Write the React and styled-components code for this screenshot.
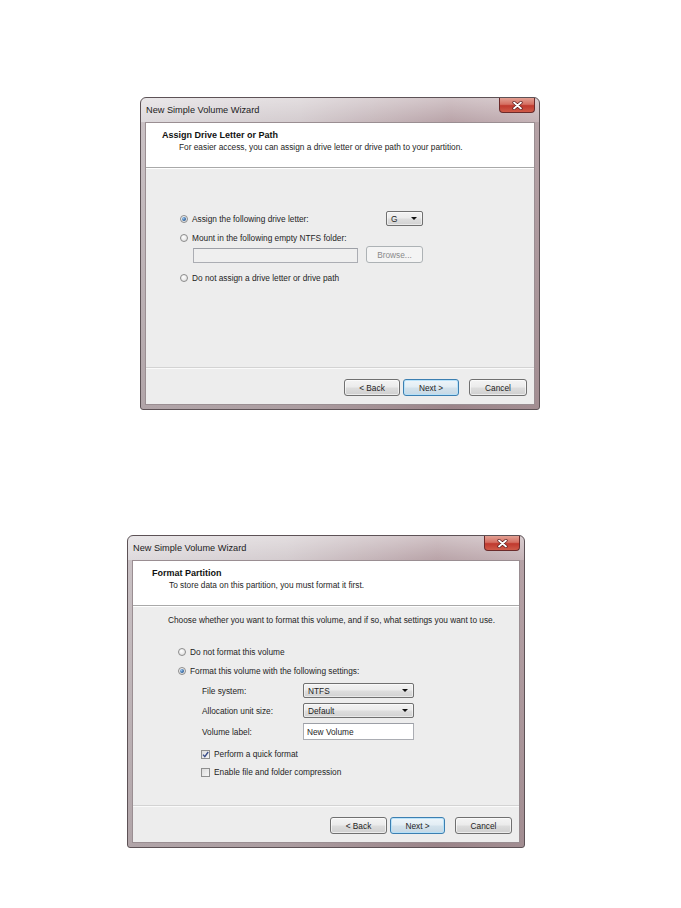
import React from 'react'
import styled, { createGlobalStyle, css } from 'styled-components'

const GlobalStyle = createGlobalStyle`
  html, body { margin: 0; padding: 0; background: #fff; }
  body { font-family: "Liberation Sans", Arial, sans-serif; color: #1e1e1e; }
`

const Page = styled.div`
  width: 681px;
  height: 908px;
  padding-top: 97px;
  box-sizing: border-box;
  background: #fff;
  overflow: hidden;
`

const Window = styled.div`
  position: relative;
  width: ${p => p.$width}px;
  height: 313px;
  margin-left: ${p => p.$left}px;
  margin-top: ${p => p.$top || 0}px;
  box-sizing: border-box;
  display: flex;
  flex-direction: column;
  border: 1px solid #5d5256;
  border-radius: 6px 6px 3px 3px;
  background:
    linear-gradient(180deg, rgba(255,255,255,0.35) 0, rgba(255,255,255,0) 24px, rgba(120,95,100,0.2) 24px, rgba(110,85,90,0.4) 100%),
    linear-gradient(90deg, #dedadd 0%, #d4cccf 40%, #b9a3a8 78%, #c5b3b7 100%);
`

const TitleBar = styled.div`
  height: 24px;
  flex: none;
  display: flex;
  align-items: center;
  padding-left: 5px;
  font-size: 9.2px;
  color: #1b1b1b;
`

const CloseButton = styled.div`
  position: absolute;
  top: 0;
  right: 4px;
  width: 36px;
  height: 15px;
  box-sizing: border-box;
  border: 1px solid #6b2a2a;
  border-top: none;
  border-radius: 0 0 4px 4px;
  background: linear-gradient(180deg, #e3a093 0%, #d56f62 45%, #c0392e 55%, #cf5a48 100%);
  display: flex;
  align-items: center;
  justify-content: center;
`

const Client = styled.div`
  flex: 1;
  margin: 0 4px 4px 4px;
  border: 1px solid #9a8e92;
  background: #ededed;
  display: flex;
  flex-direction: column;
  min-height: 0;
`

const Header = styled.div`
  height: 45px;
  flex: none;
  box-sizing: border-box;
  background: #fff;
  border-bottom: 1px solid #a9a9a9;
  padding: 7px 0 0 ${p => p.$indent}px;
`

const Heading = styled.div`
  font-size: 9px;
  font-weight: bold;
  line-height: 11px;
  color: #111;
`

const SubHeading = styled.div`
  font-size: 8.3px;
  line-height: 11px;
  margin: 1px 0 0 17px;
`

const Body = styled.div`
  flex: 1;
  display: flex;
  flex-direction: column;
  padding: ${p => p.$top}px 0 0 ${p => p.$left}px;
  font-size: 8.3px;
  box-shadow: inset 0 1px 0 #fff;
`

const Footer = styled.div`
  height: 37px;
  flex: none;
  box-sizing: border-box;
  border-top: 1px solid #d3d3d3;
  box-shadow: inset 0 1px 0 #fafafa;
  display: flex;
  justify-content: flex-end;
  align-items: flex-start;
  padding: 11px 7px 0 0;
`

const Button = styled.div`
  width: ${p => p.$w}px;
  height: 17px;
  margin-left: ${p => p.$gap}px;
  box-sizing: border-box;
  border: 1px solid #707070;
  border-radius: 3px;
  background: linear-gradient(180deg, #f4f4f4 0%, #ebebeb 48%, #dddddd 52%, #cfcfcf 100%);
  box-shadow: inset 0 0 0 1px rgba(255,255,255,0.6);
  font-size: 8.3px;
  display: flex;
  align-items: center;
  justify-content: center;
  ${p => p.$default && css`
    border-color: #3c7fb1;
    background: linear-gradient(180deg, #eef5fa 0%, #e2edf4 48%, #d3e2ec 52%, #c6d8e5 100%);
    box-shadow: inset 0 0 0 1px rgba(180,225,250,0.9);
  `}
  ${p => p.$disabled && css`
    border-color: #adb2b5;
    background: #f4f4f4;
    box-shadow: none;
    color: #8a8a8a;
  `}
`

const Line = styled.div`
  height: 11px;
  line-height: 11px;
  margin-top: ${p => p.$mt || 0}px;
`

const OptionRow = styled.div`
  height: 14px;
  display: flex;
  align-items: center;
  margin-top: ${p => p.$mt || 0}px;
  padding-left: ${p => p.$indent || 0}px;
  width: ${p => (p.$width ? `${p.$width}px` : 'auto')};
  justify-content: ${p => (p.$spread ? 'space-between' : 'flex-start')};
`

const Label = styled.span`
  display: flex;
  align-items: center;
  gap: 4px;
`

const Radio = styled.span`
  width: 8px;
  height: 8px;
  box-sizing: border-box;
  border-radius: 50%;
  border: 1px solid #8c8c8c;
  background: radial-gradient(circle at 40% 35%, #ffffff 0%, #e4e4e4 70%, #cfcfcf 100%);
  display: flex;
  align-items: center;
  justify-content: center;
  &::after {
    content: '';
    width: 4px;
    height: 4px;
    border-radius: 50%;
    display: ${p => (p.$checked ? 'block' : 'none')};
    background: radial-gradient(circle at 35% 35%, #9cc6ee 0%, #3a6ea8 55%, #1f4578 100%);
  }
`

const CheckBox = styled.span`
  width: 9px;
  height: 9px;
  box-sizing: border-box;
  border: 1px solid #8e8f8f;
  background: linear-gradient(135deg, #dcdcdc 0%, #f6f6f6 100%);
  display: flex;
  align-items: center;
  justify-content: center;
`

const TextBox = styled.div`
  width: ${p => p.$w}px;
  height: ${p => p.$h}px;
  box-sizing: border-box;
  border: 1px solid #abadb3;
  border-top-color: #9c9fa6;
  background: ${p => (p.$disabled ? '#efefef' : '#fff')};
  padding-left: 3px;
  display: flex;
  align-items: center;
  font-size: 8.3px;
`

const Combo = styled.div`
  width: ${p => p.$w}px;
  height: 15px;
  box-sizing: border-box;
  border: 1px solid #707070;
  border-radius: 2px;
  background: linear-gradient(180deg, #f3f3f3 0%, #ebebeb 48%, #dedede 52%, #d2d2d2 100%);
  box-shadow: inset 0 0 0 1px rgba(255,255,255,0.5);
  display: flex;
  align-items: center;
  justify-content: space-between;
  padding: 0 5px 0 4px;
  font-size: 8.3px;
  &::after {
    content: '';
    border-left: 3px solid transparent;
    border-right: 3px solid transparent;
    border-top: 3px solid #111;
  }
`

const PathRow = styled.div`
  display: flex;
  align-items: flex-end;
  gap: 8px;
  padding-left: 13px;
  height: 18px;
`

const SettingsGrid = styled.div`
  display: grid;
  grid-template-columns: 101px 111px;
  row-gap: 5px;
  align-items: center;
  padding-left: 34px;
  margin-top: 5px;
`

const FieldLabel = styled.span`
  font-size: 8.3px;
`

const CheckRow = styled.div`
  height: 14px;
  display: flex;
  align-items: center;
  padding-left: 33px;
  margin-top: ${p => p.$mt}px;
`

const CloseGlyph = () => (
  <svg width="11" height="9" viewBox="0 0 11 9">
    <path d="M2 1.5 L9 7.5 M9 1.5 L2 7.5" stroke="#5a1a1a" strokeWidth="3.2" strokeLinecap="round" />
    <path d="M2 1.5 L9 7.5 M9 1.5 L2 7.5" stroke="#fff" strokeWidth="1.8" strokeLinecap="round" />
  </svg>
)

const Check = () => (
  <svg width="7" height="7" viewBox="0 0 7 7">
    <path d="M1 3.6 L2.8 5.6 L6.2 1" fill="none" stroke="#3b4f8a" strokeWidth="1.4" />
  </svg>
)

const Wizard = ({ width, left, top, heading, subheading, headIndent, bodyTop, bodyLeft, children, buttons }) => (
  <Window $width={width} $left={left} $top={top}>
    <TitleBar>New Simple Volume Wizard</TitleBar>
    <CloseButton><CloseGlyph /></CloseButton>
    <Client>
      <Header $indent={headIndent}>
        <Heading>{heading}</Heading>
        <SubHeading>{subheading}</SubHeading>
      </Header>
      <Body $top={bodyTop} $left={bodyLeft}>{children}</Body>
      <Footer>
        <Button $w={buttons[0]}>&lt; Back</Button>
        <Button $w={buttons[1]} $gap={3} $default>Next &gt;</Button>
        <Button $w={buttons[2]} $gap={10}>Cancel</Button>
      </Footer>
    </Client>
  </Window>
)

const App = () => (
  <Page>
    <GlobalStyle />
    <Wizard
      width={400}
      left={140}
      heading="Assign Drive Letter or Path"
      subheading="For easier access, you can assign a drive letter or drive path to your partition."
      headIndent={16}
      bodyTop={43}
      bodyLeft={34}
      buttons={[56, 56, 58]}
    >
      <OptionRow $width={243} $spread style={{ height: 15 }}>
        <Label><Radio $checked />Assign the following drive letter:</Label>
        <Combo $w={37}>G</Combo>
      </OptionRow>
      <OptionRow $mt={5}>
        <Label><Radio />Mount in the following empty NTFS folder:</Label>
      </OptionRow>
      <PathRow>
        <TextBox $w={165} $h={15} $disabled />
        <Button $w={57} $disabled>Browse...</Button>
      </PathRow>
      <OptionRow $mt={8}>
        <Label><Radio />Do not assign a drive letter or drive path</Label>
      </OptionRow>
    </Wizard>

    <Wizard
      width={398}
      left={127}
      top={125}
      heading="Format Partition"
      subheading="To store data on this partition, you must format it first."
      headIndent={19}
      bodyTop={9}
      bodyLeft={35}
      buttons={[57, 55, 57]}
    >
      <Line>Choose whether you want to format this volume, and if so, what settings you want to use.</Line>
      <OptionRow $mt={19} $indent={10}>
        <Label><Radio />Do not format this volume</Label>
      </OptionRow>
      <OptionRow $mt={5} $indent={10}>
        <Label><Radio $checked />Format this volume with the following settings:</Label>
      </OptionRow>
      <SettingsGrid>
        <FieldLabel>File system:</FieldLabel>
        <Combo $w={111}>NTFS</Combo>
        <FieldLabel>Allocation unit size:</FieldLabel>
        <Combo $w={111}>Default</Combo>
        <FieldLabel>Volume label:</FieldLabel>
        <TextBox $w={111} $h={17}>New Volume</TextBox>
      </SettingsGrid>
      <CheckRow $mt={7}>
        <Label><CheckBox><Check /></CheckBox>Perform a quick format</Label>
      </CheckRow>
      <CheckRow $mt={4}>
        <Label><CheckBox />Enable file and folder compression</Label>
      </CheckRow>
    </Wizard>
  </Page>
)

export default App
